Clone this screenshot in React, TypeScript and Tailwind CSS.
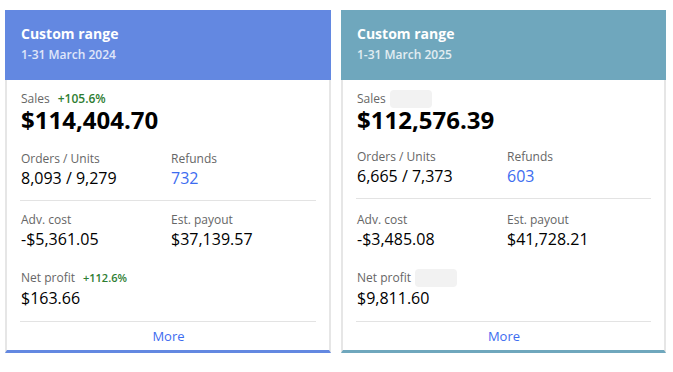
import React from "react";

type CardProps = {
  width: string;
  headerBg: string;
  barBorder: string;
  date: string;
  sales: string;
  salesBadge?: string;
  orders: string;
  refunds: string;
  adv: string;
  payout: string;
  net: string;
  netBadge?: string;
  ordersMt: string;
  advMt: string;
};

function Placeholder() {
  return <div className="w-[42px] h-[18px] rounded-[4px] bg-[#f2f2f2]" />;
}

function Card(p: CardProps) {
  return (
    <div className={`${p.width} flex flex-col`}>
      <div className={`${p.headerBg} h-[70px] px-4 pt-[14px]`}>
        <div className="text-[14px] leading-[20px] font-bold text-white">Custom range</div>
        <div className="mt-[3px] text-[12px] leading-[16px] font-semibold text-white/80">{p.date}</div>
      </div>
      <div className={`border-x-2 border-[#e6e6e6] border-b-[3px] ${p.barBorder} px-[14px] pr-[13px] pt-[11px]`}>
        <div className="flex items-center gap-[4px] h-[16px]">
          <span className="text-[12px] leading-[16px] text-[#666]">Sales</span>
          {p.salesBadge ? (
            <span className="px-[4px] text-[12px] leading-[16px] font-semibold text-[#2e7d32]">{p.salesBadge}</span>
          ) : (
            <Placeholder />
          )}
        </div>
        <div className="text-[24px] leading-[26px] font-bold text-black">{p.sales}</div>
        <div className={`flex ${p.ordersMt}`}>
          <div className="w-[150px]">
            <div className="text-[12px] leading-[16px] text-[#666]">Orders / Units</div>
            <div className="mt-px text-[16px] leading-[20px] text-black">{p.orders}</div>
          </div>
          <div>
            <div className="text-[12px] leading-[16px] text-[#666]">Refunds</div>
            <div className="mt-px text-[16px] leading-[20px] text-[#3d6cf0]">{p.refunds}</div>
          </div>
        </div>
        <div className="mt-[12px] h-px bg-[#e3e3e3] -ml-px" />
        <div className={`flex ${p.advMt}`}>
          <div className="w-[150px]">
            <div className="text-[12px] leading-[16px] text-[#666]">Adv. cost</div>
            <div className="mt-px text-[16px] leading-[20px] text-black">{p.adv}</div>
          </div>
          <div>
            <div className="text-[12px] leading-[16px] text-[#666]">Est. payout</div>
            <div className="mt-px text-[16px] leading-[20px] text-black">{p.payout}</div>
          </div>
        </div>
        <div className="mt-[20px]">
          <div className="flex items-center gap-[4px] h-[18px]">
            <span className="text-[12px] leading-[16px] text-[#666]">Net profit</span>
            {p.netBadge ? (
              <span className="px-[4px] text-[11px] leading-[16px] font-semibold text-[#2e7d32]">{p.netBadge}</span>
            ) : (
              <Placeholder />
            )}
          </div>
          <div className="mt-px text-[16px] leading-[20px] text-black">{p.net}</div>
        </div>
        <div className="mt-[13px] h-px bg-[#e3e3e3] -ml-px" />
        <div className="h-[28px] text-center text-[13px] leading-[28px] text-[#3d6cf0]">More</div>
      </div>
    </div>
  );
}

export default function App() {
  return (
    <div
      className="flex gap-[10px] pl-[5px] pt-[10px] bg-white w-[673px] h-[372px]"
      style={{ fontFamily: '"Open Sans", sans-serif' }}
    >
      <Card
        width="w-[326px]"
        headerBg="bg-[#6388e1]"
        barBorder="border-b-[#6388e1]"
        date="1-31 March 2024"
        sales="$114,404.70"
        salesBadge="+105.6%"
        orders="8,093 / 9,279"
        refunds="732"
        adv="-$5,361.05"
        payout="$37,139.57"
        net="$163.66"
        netBadge="+112.6%"
        ordersMt="mt-[18px]"
        advMt="mt-[11px]"
      />
      <Card
        width="w-[325px]"
        headerBg="bg-[#6fa7bd]"
        barBorder="border-b-[#6fa7bd]"
        date="1-31 March 2025"
        sales="$112,576.39"
        orders="6,665 / 7,373"
        refunds="603"
        adv="-$3,485.08"
        payout="$41,728.21"
        net="$9,811.60"
        ordersMt="mt-[16px]"
        advMt="mt-[13px]"
      />
    </div>
  );
}
